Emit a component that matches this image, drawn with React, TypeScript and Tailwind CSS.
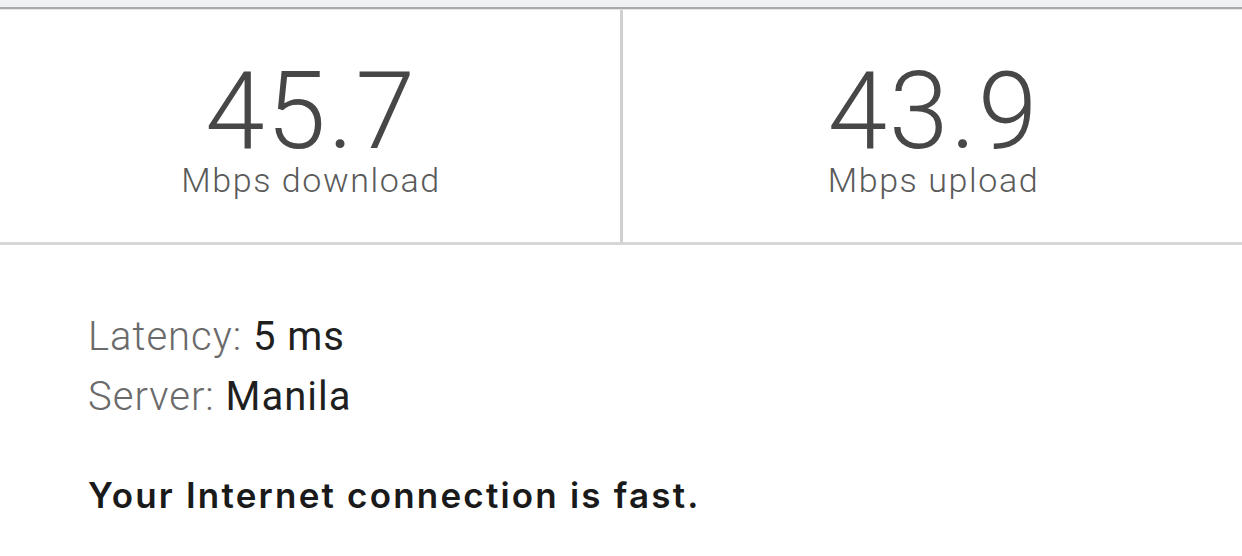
import React from "react";

export default function App() {
  return (
    <div className="w-[1242px] h-[556px] bg-white overflow-hidden">
      <div className="h-[7px] bg-[#f0f1f3]" />
      <div className="h-[2px] bg-[#a9a9a9]" />
      <div className="h-[1px] bg-[#e4e4e4]" />
      <div className="grid grid-cols-[623px_1fr] h-[235px] border-b-[3px] border-[#d6d6d6]">
        <div className="border-r-[3px] border-[#d0d0d0] flex flex-col items-center pt-[50px]">
          <div className="font-['Roboto'] font-light text-[107px] tracking-[2px] leading-[103px] text-[#474747] pl-[2px]">45.7</div>
          <div className="font-['Roboto'] font-light text-[34px] tracking-[1.6px] leading-none text-[#5a5a5a] pl-[2px]">Mbps download</div>
        </div>
        <div className="flex flex-col items-center pt-[50px]">
          <div className="font-['Roboto'] font-light text-[107px] tracking-[2px] leading-[103px] text-[#474747] pl-[2px]">43.9</div>
          <div className="font-['Roboto'] font-light text-[34px] tracking-[1.6px] leading-none text-[#5a5a5a] pl-[2px]">Mbps upload</div>
        </div>
      </div>
      <div className="pl-[88px] pt-[62px]">
        <div className="font-['Roboto'] text-[40px] leading-[60px] tracking-[1px]">
          <div>
            <span className="font-light text-[#6a6a6a]">Latency: </span>
            <span className="text-[#1f1f1f]">5 ms</span>
          </div>
          <div>
            <span className="font-light text-[#6a6a6a]">Server: </span>
            <span className="text-[#1f1f1f]">Manila</span>
          </div>
        </div>
        <div className="mt-[51px] font-['Inter'] font-semibold text-[35px] tracking-[2.2px] leading-none text-[#1a1a1a]">
          Your Internet connection is fast.
        </div>
      </div>
    </div>
  );
}
